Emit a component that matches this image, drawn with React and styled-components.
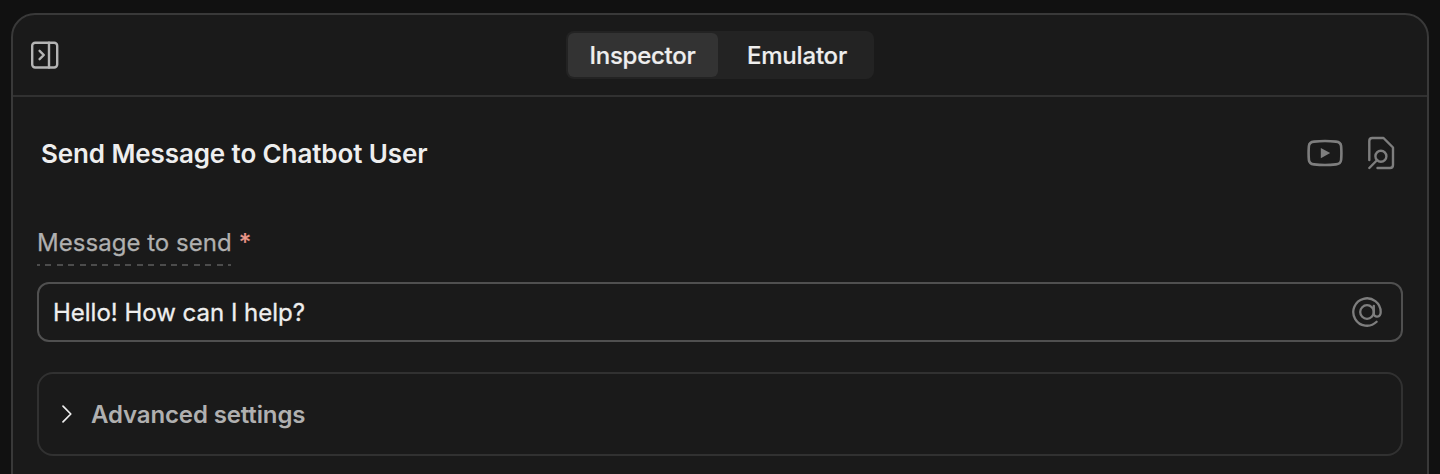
import React from "react";
import styled, { createGlobalStyle } from "styled-components";

const GlobalStyle = createGlobalStyle`
  *, *::before, *::after { box-sizing: border-box; }
  body {
    margin: 0;
    background: #111111;
    font-family: Inter, "Liberation Sans", sans-serif;
    overflow: hidden;
  }
`;

const Page = styled.div`
  height: 474px;
  padding: 13px 11px 0;
  overflow: hidden;
`;

const Panel = styled.section`
  height: 520px;
  border: 2px solid #393939;
  border-radius: 24px;
  background: #1a1a1a;
`;

const Header = styled.header`
  display: grid;
  grid-template-columns: 1fr auto 1fr;
  align-items: center;
  height: 82px;
  padding: 0 16px;
  border-bottom: 2px solid #313131;
`;

const IconButton = styled.button`
  display: flex;
  width: max-content;
  padding: 0;
  border: 0;
  background: none;
  color: ${(p) => p.$color || "#7e7e7e"};
`;

const Tabs = styled.div`
  display: flex;
  width: 308px;
  height: 48px;
  padding: 2px;
  border-radius: 8px;
  background: #232323;
`;

const Tab = styled.button`
  flex: none;
  width: ${(p) => p.$width}px;
  padding: 1px ${(p) => p.$insetEnd || 0}px 0 ${(p) => p.$inset || 0}px;
  border: 0;
  border-radius: 6px;
  background: ${(p) => (p.$active ? "#333333" : "transparent")};
  color: #eeeeee;
  font: 500 24px/30px Inter, sans-serif;
  letter-spacing: ${(p) => p.$spacing}px;
  white-space: nowrap;
  -webkit-text-stroke: 0.2px currentColor;
`;

const Body = styled.div`
  padding: 0 24px;
`;

const TitleRow = styled.div`
  display: flex;
  align-items: center;
  justify-content: space-between;
  height: 112px;
  padding: 0 7px 0 4px;
`;

const Title = styled.h1`
  margin: 0;
  padding-top: 2px;
  color: #eeeeee;
  font-size: 26px;
  font-weight: 600;
  line-height: 32px;
  letter-spacing: -0.11px;
  white-space: nowrap;
`;

const Actions = styled.div`
  display: flex;
  align-items: center;
  gap: 23px;
`;

const Field = styled.div`
  display: flex;
  flex-direction: column;
  padding-top: 18px;
`;

const LabelRow = styled.label`
  display: flex;
  align-items: flex-start;
  gap: 8px;
  height: 39px;
  color: #b0b0b0;
  font-size: 24px;
  line-height: 32px;
  letter-spacing: 0.03px;
  white-space: nowrap;
  -webkit-text-stroke: 0.25px currentColor;
`;

const LabelText = styled.span`
  width: 194px;
  height: 39px;
  background: repeating-linear-gradient(
      90deg,
      #4c4c4c 0 3px,
      transparent 3px 8.41px,
      #4c4c4c 8.41px 11.41px
    )
    bottom / 100% 2px no-repeat;
`;

const Required = styled.span`
  color: #ec9a8c;
`;

const InputBox = styled.div`
  display: flex;
  align-items: center;
  justify-content: space-between;
  height: 60px;
  margin-top: 16px;
  padding: 0 18px 0 14px;
  border: 2px solid #505050;
  border-radius: 12px;
`;

const Value = styled.span`
  padding-top: 2px;
  color: #eeeeee;
  font-size: 24px;
  line-height: 30px;
  letter-spacing: -0.01px;
  white-space: nowrap;
  -webkit-text-stroke: 0.3px currentColor;
`;

const Advanced = styled.button`
  display: flex;
  align-items: center;
  gap: 18px;
  width: 100%;
  height: 84px;
  margin-top: 30px;
  padding: 0 22px;
  border: 2px solid #313131;
  border-radius: 16px;
  background: none;
  color: #b0b0b0;
  font: 600 24px/30px Inter, sans-serif;
  letter-spacing: -0.13px;
  white-space: nowrap;
`;

const AdvancedLabel = styled.span`
  padding-top: 2px;
`;

const Glyph = styled.svg`
  display: block;
  flex: none;
  fill: none;
  stroke: currentColor;
  stroke-linecap: round;
  stroke-linejoin: round;
`;

const CollapseIcon = () => (
  <Glyph width="30" height="30" viewBox="0 0 30 30" strokeWidth="2.4">
    <rect x="3.2" y="2.7" width="25" height="24.8" rx="3" />
    <path d="M20 2.7v24.8M10.6 10.8l4.2 4.2-4.2 4.2" />
  </Glyph>
);

const VideoIcon = () => (
  <Glyph width="36" height="36" viewBox="0 0 36 36" strokeWidth="2.6">
    <path d="M7 6.6Q18 5.5 29 6.6Q33.7 7 34.1 11Q34.7 18 34.1 25Q33.7 28.9 29 29.4Q18 30.5 7 29.4Q2.3 28.9 1.9 25Q1.3 18 1.9 11Q2.3 7 7 6.6Z" />
    <path d="M13.8 13v10.2l9.4-5.1z" fill="currentColor" stroke="none" />
  </Glyph>
);

const FileSearchIcon = () => (
  <Glyph width="30" height="36" viewBox="0 0 30 36" strokeWidth="2.4">
    <path d="M3.3 25V6Q3.3 3 6.3 3H17.5L27 12.5V30Q27 33 24 33H11.5" />
    <circle cx="14.9" cy="21.2" r="5.5" />
    <path d="M11.2 25L3.3 33" />
  </Glyph>
);

const AtIcon = () => (
  <Glyph width="32" height="32" viewBox="0 0 32 32" strokeWidth="2.3">
    <circle cx="16" cy="16" r="6.8" />
    <path d="M22.8 9.8v7.6c0 4.5 6.9 4.6 6.9-1.4A13.7 13.7 0 1 0 25.6 25.8" />
  </Glyph>
);

const ChevronIcon = () => (
  <Glyph width="12" height="20" viewBox="0 0 12 20" strokeWidth="1.7">
    <path d="M2 2.2l7.8 7.8L2 17.8" stroke="#eeeeee" />
  </Glyph>
);

export default function App() {
  return (
    <>
      <GlobalStyle />
      <Page>
        <Panel>
          <Header>
            <IconButton aria-label="Collapse panel" $color="#b4b4b4">
              <CollapseIcon />
            </IconButton>
            <Tabs>
              <Tab $active $width={150} $insetEnd={1} $spacing={-0.25}>Inspector</Tab>
              <Tab $width={154} $inset={4} $spacing={-0.2}>Emulator</Tab>
            </Tabs>
          </Header>
          <Body>
            <TitleRow>
              <Title>Send Message to Chatbot User</Title>
              <Actions>
                <IconButton aria-label="Watch video"><VideoIcon /></IconButton>
                <IconButton aria-label="Documentation"><FileSearchIcon /></IconButton>
              </Actions>
            </TitleRow>
            <Field>
              <LabelRow>
                <LabelText>Message to send</LabelText>
                <Required>*</Required>
              </LabelRow>
              <InputBox>
                <Value>Hello! How can I help?</Value>
                <IconButton aria-label="Insert variable"><AtIcon /></IconButton>
              </InputBox>
            </Field>
            <Advanced>
              <ChevronIcon />
              <AdvancedLabel>Advanced settings</AdvancedLabel>
            </Advanced>
          </Body>
        </Panel>
      </Page>
    </>
  );
}
